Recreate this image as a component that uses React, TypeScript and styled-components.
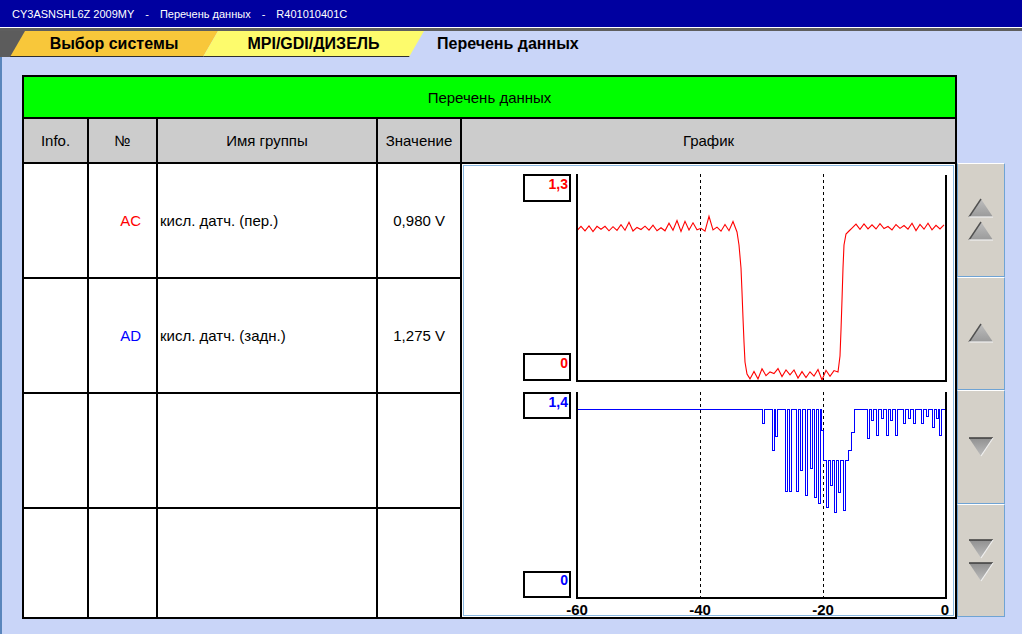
import * as React from 'react';

import styled, { createGlobalStyle } from 'styled-components';

const GlobalStyle = createGlobalStyle`
  html,
  body {
    margin: 0;
    padding: 0;
    overflow: hidden;
  }

  body {
    background: #c9d5f8;
    font-family: 'Liberation Sans', Arial, sans-serif;
  }
`;

const Window = styled.div`
  width: 1022px;
  height: 634px;

  background-color: #c9d5f8;

  display: flex;
  flex-direction: column;
  overflow: hidden;
`;

const TitleBar = styled.div`
  height: 27px;
  flex: none;

  background-color: #0000a0;
  border-bottom: 1px solid #ffffff;

  color: #ffffff;
  font-size: 11px;

  padding-left: 12px;

  display: flex;
  align-items: center;
  gap: 11px;
`;

const TabBar = styled.div`
  height: 26px;
  flex: none;

  border-top: 3px solid #5e5e5e;

  display: flex;
  align-items: stretch;
`;

const Wedge = styled.div`
  width: 25px;
  flex: none;

  background-color: #5c5c5c;
`;

const Tab = styled.div<{ $color: string; $width: number }>`
  width: ${(p) => p.$width}px;
  flex: none;
  margin-left: -15px;

  clip-path: polygon(15px 0, 100% 0, calc(100% - 15px) 100%, 0 100%);
  background: linear-gradient(to bottom, ${(p) => p.$color} 25px, #2e2e2e 25px);

  font-size: 16px;
  font-weight: bold;
  color: #000000;

  display: flex;
  align-items: center;
  justify-content: center;
`;

const ActiveTab = styled.div`
  padding-left: 13px;

  font-size: 16px;
  font-weight: bold;
  color: #000000;

  display: flex;
  align-items: center;
`;

const Content = styled.div`
  flex: 1;

  border-left: 2px solid #5a86bc;
  padding: 18px 0 0 20px;

  display: flex;
  align-items: flex-start;
`;

const Table = styled.div`
  width: 935px;
  height: 544px;
  box-sizing: border-box;

  background-color: #000000;
  padding: 2px;

  display: grid;
  grid-template-columns: 63px 67px 218px 82px 493px;
  grid-template-rows: 40px 43px 113px 113px 113px 108px;
  gap: 2px;

  font-size: 15px;
`;

const Caption = styled.div`
  grid-column: 1 / -1;

  background-color: #00ff00;

  display: flex;
  align-items: center;
  justify-content: center;
`;

const HeadCell = styled.div`
  background-color: #cccccc;

  display: flex;
  align-items: center;
  justify-content: center;
`;

const Cell = styled.div<{ $align?: 'left' | 'right'; $color?: string }>`
  background-color: #ffffff;
  color: ${(p) => p.$color || '#000000'};

  padding: ${(p) => (p.$align === 'left' ? '0 0 0 2px' : '0 15px 0 0')};

  display: flex;
  align-items: center;
  justify-content: ${(p) => (p.$align === 'left' ? 'flex-start' : 'flex-end')};
  white-space: nowrap;
`;

const GraphCell = styled.div`
  grid-column: 5;
  grid-row: 3 / span 4;

  background-color: #ffffff;
  padding: 1px;
`;

const GraphFrame = styled.div`
  height: 100%;
  box-sizing: border-box;

  border: 1px solid #8ab8e0;
`;

const ScrollColumn = styled.div`
  width: 48px;
  height: 454px;
  margin-top: 88px;

  display: flex;
  flex-direction: column;
`;

const ScrollButton = styled.div`
  flex: 1;
  box-sizing: border-box;

  background-color: #d4d0c8;
  border: 1px solid #6fa3d4;
  border-top-color: #ffffff;

  display: flex;
  flex-direction: column;
  align-items: center;
  justify-content: center;
  gap: 3px;
`;

const Arrow: React.FC<{ down?: boolean }> = ({ down }) =>
  down ? (
    <svg width="26" height="20" viewBox="0 0 26 20">
      <defs>
        <linearGradient id="gd" x1="0" y1="0" x2="0" y2="1">
          <stop offset="0" stopColor="#909090" />
          <stop offset="1" stopColor="#bdbdbd" />
        </linearGradient>
      </defs>
      <polygon points="1,1 25,1 13,19" fill="url(#gd)" />
      <line x1="1" y1="1" x2="25" y2="1" stroke="#3c3c3c" strokeWidth="1.5" />
      <line x1="25" y1="1" x2="13" y2="19" stroke="#f0f0f0" strokeWidth="1.2" />
    </svg>
  ) : (
    <svg width="26" height="20" viewBox="0 0 26 20">
      <defs>
        <linearGradient id="gu" x1="0" y1="0" x2="0" y2="1">
          <stop offset="0" stopColor="#bdbdbd" />
          <stop offset="1" stopColor="#9a9a9a" />
        </linearGradient>
      </defs>
      <polygon points="13,1 25,19 1,19" fill="url(#gu)" />
      <line x1="1" y1="19" x2="13" y2="1" stroke="#505050" strokeWidth="1.4" />
      <line x1="1" y1="19" x2="25" y2="19" stroke="#f0f0f0" strokeWidth="1.2" />
    </svg>
  );

const mulberry32 = (seed: number) => () => {
  seed = (seed + 0x6d2b79f5) | 0;
  let t = Math.imul(seed ^ (seed >>> 15), 1 | seed);
  t = (t + Math.imul(t ^ (t >>> 7), 61 | t)) ^ t;
  return ((t ^ (t >>> 14)) >>> 0) / 4294967296;
};

// front sensor trace, page coordinates
const buildRed = () => {
  const r = mulberry32(11);
  const pts: [number, number][] = [];
  let i = 0;
  for (let x = 577; x <= 735; x += 4, i++) {
    const amp = x < 622 ? 5 : x < 700 ? 10 : 13;
    pts.push([x, i % 2 === 0 ? 229 + r() * 3 : 229 - r() * amp]);
  }
  pts.push([737, 232], [739, 245], [741, 268], [742, 292], [743, 318], [744, 342], [745, 362], [747, 374]);
  for (let x = 750; x <= 836; x += 4, i++) {
    pts.push([x, i % 2 === 0 ? 373 + r() * 7 : 372 - r() * 4]);
  }
  pts.push([838, 372], [840, 356], [841, 330], [842, 300], [843, 268], [844, 245], [846, 234], [849, 231]);
  for (let x = 852; x <= 946; x += 4, i++) {
    pts.push([x, i % 2 === 0 ? 228 + r() * 3 : 227 - r() * 4]);
  }
  return pts.map(([x, y]) => `${x},${y.toFixed(1)}`).join(' ');
};

const blueDips: [number, number][] = [
  [762, 423], [772, 450], [775, 436], [785, 491], [789, 491], [796, 491],
  [800, 470], [805, 495], [810, 468], [814, 497], [818, 503], [821, 430],
  [826, 507], [830, 485], [834, 512], [838, 492], [843, 510],
  [867, 438], [871, 420], [876, 435], [881, 418], [886, 435], [890, 420],
  [895, 435], [903, 423], [908, 418], [913, 423], [921, 423], [926, 416],
  [932, 427], [936, 418], [939, 435],
];

const blueBase = (x: number) => {
  if (x < 823) return 409;
  if (x < 848) return 460;
  if (x < 851) return 450;
  if (x < 854) return 432;
  return 409;
};

// sample-and-hold path, one sample per pixel
const buildBlue = () => {
  const dipAt = new Map<number, number>();
  blueDips.forEach(([x, depth]) => {
    dipAt.set(x, depth);
    dipAt.set(x + 1, depth);
  });
  let level = 409;
  let d = `M577 ${level}.5`;
  for (let x = 578; x <= 946; x++) {
    const v = dipAt.get(x) ?? blueBase(x);
    if (v !== level) {
      d += ` H${x}.5 V${v}.5`;
      level = v;
    }
  }
  return d + ' H946';
};

const redPoints = buildRed();
const bluePath = buildBlue();

const labelFont = "'Liberation Sans', Arial, sans-serif";

const Chart: React.FC = () => (
  <svg
    width="489"
    height="449"
    viewBox="464 166 489 449"
    style={{ display: 'block', overflow: 'visible' }}
  >
    <g fontFamily={labelFont} fontWeight="bold" fontSize="14">
      <rect x="524" y="175" width="46" height="26" fill="none" stroke="#000" strokeWidth="2" />
      <text x="568" y="189" textAnchor="end" fill="#ff0000">1,3</text>
      <rect x="524" y="354" width="46" height="26" fill="none" stroke="#000" strokeWidth="2" />
      <text x="568" y="368" textAnchor="end" fill="#ff0000">0</text>

      <rect x="524" y="393" width="46" height="25" fill="none" stroke="#000" strokeWidth="2" />
      <text x="568" y="407" textAnchor="end" fill="#0000ff">1,4</text>
      <rect x="524" y="572" width="46" height="25" fill="none" stroke="#000" strokeWidth="2" />
      <text x="568" y="585" textAnchor="end" fill="#0000ff">0</text>

      <text x="577" y="615" textAnchor="middle" fill="#000" fontSize="15">-60</text>
      <text x="700" y="615" textAnchor="middle" fill="#000" fontSize="15">-40</text>
      <text x="823" y="615" textAnchor="middle" fill="#000" fontSize="15">-20</text>
      <text x="945" y="615" textAnchor="middle" fill="#000" fontSize="15">0</text>
    </g>

    <g stroke="#000" strokeWidth="1" strokeDasharray="3 3" shapeRendering="crispEdges">
      <line x1="700.5" y1="174" x2="700.5" y2="381" />
      <line x1="823.5" y1="174" x2="823.5" y2="381" />
      <line x1="700.5" y1="392" x2="700.5" y2="598" />
      <line x1="823.5" y1="392" x2="823.5" y2="598" />
    </g>

    <polyline points={redPoints} fill="none" stroke="#ff0000" strokeWidth="1.1" />
    <path d={bluePath} fill="none" stroke="#0000ff" strokeWidth="1" shapeRendering="crispEdges" />

    <g fill="none" stroke="#000" strokeWidth="2">
      <path d="M577 174 V381 H946 V175" />
      <path d="M577 392 V598 H946 V392" />
    </g>
  </svg>
);

interface RowData {
  code: string;
  color: string;
  name: string;
  value: string;
}

const rows: RowData[] = [
  { code: 'AC', color: '#ff0000', name: 'кисл. датч. (пер.)', value: '0,980 V' },
  { code: 'AD', color: '#0000ff', name: 'кисл. датч. (задн.)', value: '1,275 V' },
  { code: '', color: '#000000', name: '', value: '' },
  { code: '', color: '#000000', name: '', value: '' },
];

const App: React.FC = () => {
  return (
    <Window>
      <GlobalStyle />
      <TitleBar>
        <span>CY3ASNSHL6Z 2009MY</span>
        <span>-</span>
        <span>Перечень данных</span>
        <span>-</span>
        <span>R401010401C</span>
      </TitleBar>

      <TabBar>
        <Wedge />
        <Tab $color="#f8c73a" $width={208}>Выбор системы</Tab>
        <Tab $color="#fdfb6c" $width={221}>MPI/GDI/ДИЗЕЛЬ</Tab>
        <ActiveTab>Перечень данных</ActiveTab>
      </TabBar>

      <Content>
        <Table>
          <Caption>Перечень данных</Caption>
          <HeadCell>Info.</HeadCell>
          <HeadCell>№</HeadCell>
          <HeadCell>Имя группы</HeadCell>
          <HeadCell>Значение</HeadCell>
          <HeadCell>График</HeadCell>

          {rows.map((row, i) => (
            <React.Fragment key={i}>
              <Cell style={{ gridColumn: 1 }} />
              <Cell $color={row.color}>{row.code}</Cell>
              <Cell $align="left">{row.name}</Cell>
              <Cell>{row.value}</Cell>
            </React.Fragment>
          ))}

          <GraphCell>
            <GraphFrame>
              <Chart />
            </GraphFrame>
          </GraphCell>
        </Table>

        <ScrollColumn>
          <ScrollButton>
            <Arrow />
            <Arrow />
          </ScrollButton>
          <ScrollButton>
            <Arrow />
          </ScrollButton>
          <ScrollButton>
            <Arrow down />
          </ScrollButton>
          <ScrollButton>
            <Arrow down />
            <Arrow down />
          </ScrollButton>
        </ScrollColumn>
      </Content>
    </Window>
  );
};

export default App;
